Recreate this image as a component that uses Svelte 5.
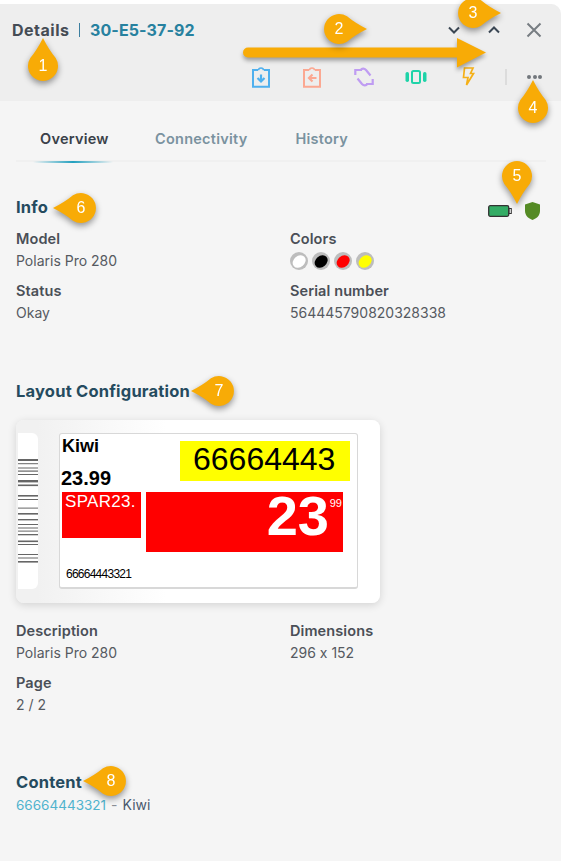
<script>
  const pins = [
    { n: 1, x: 43, y: 66, dir: 0 },
    { n: 2, x: 339, y: 29, dir: 90 },
    { n: 3, x: 473, y: 13, dir: 90 },
    { n: 4, x: 533, y: 108, dir: 0 },
    { n: 5, x: 517, y: 176, dir: 180 },
    { n: 6, x: 81, y: 208, dir: 270 },
    { n: 7, x: 219, y: 391, dir: 270 },
    { n: 8, x: 111, y: 781, dir: 270 }
  ];
  const bars = [[0,2],[4.2,1],[8.5,1],[11.5,1.2],[15,1],[21,2.4],[25.5,1.6],[36,1.6],[40,1],[48.6,1],[54,1.6],[60,1.4],[65,1],[68.5,1],[71.6,1],[75,1.3],[81.5,1.6],[85,1],[95,1],[98.5,1],[102,1.6]];
  const swatches = ["#fff", "#000", "#f00", "#ff0"];
</script>

<div class="panel">
  <header class="head">
    <div class="top">
      <div class="title">
        <span class="details">Details</span>
        <span class="bar"></span>
        <span class="id">30-E5-37-92</span>
      </div>
      <div class="nav">
        <svg width="14" height="14" viewBox="0 0 14 14"><path d="M2 4.500 7 9.500 12 4.500" class="chev"/></svg>
        <svg width="14" height="14" viewBox="0 0 14 14"><path d="M2 9.500 7 4.500 12 9.500" class="chev"/></svg>
        <svg width="18" height="18" viewBox="0 0 18 18"><path d="M2.500 2.500 15.500 15.500M15.500 2.500 2.500 15.500" class="x"/></svg>
      </div>
    </div>
    <div class="tools">
      <svg class="ic" width="18" height="21" viewBox="0 0 18 21" fill="none" stroke="#4fb0ee"><path d="M6 3H1v16.800h16V3h-5" stroke-width="2"/><path d="M6.500 3.300a2.500 2.300 0 0 1 5 0" stroke-width="1.500"/><path d="M9 7.500v7M5.500 11 9 14.500 12.500 11" stroke-width="2.200"/></svg>
      <svg class="ic" width="18" height="21" viewBox="0 0 18 21" fill="none" stroke="#fba892"><path d="M6 3H1v16.800h16V3h-5" stroke-width="2"/><path d="M6.500 3.300a2.500 2.300 0 0 1 5 0" stroke-width="1.500"/><path d="M13.500 11H6M9.500 7.500 6 11l3.500 3.500" stroke-width="2.200"/></svg>
      <svg class="ic" width="20" height="20" viewBox="0 0 20 20" fill="none" stroke="#bf9cf2" stroke-width="2.200"><path d="M1.300 8V3H8"/><path d="M7 2.500Q9.700 0.500 12 3L16.500 8.500"/><path d="M18.700 12V17H12"/><path d="M13 17.500Q10.300 19.500 8 17L3.500 11.500"/></svg>
      <svg class="ic" width="22" height="14" viewBox="0 0 22 14"><rect x="7" y="1" width="8" height="12" rx="1.500" fill="none" stroke="#1fd3a8" stroke-width="2"/><rect x="0.500" y="2" width="3.500" height="10" rx="1.700" fill="#1fd3a8"/><rect x="18" y="2" width="3.500" height="10" rx="1.700" fill="#1fd3a8"/></svg>
      <svg class="ic" width="14" height="20" viewBox="0 0 14 20"><path d="M3.500 1h8.500L9.500 6.500H12.500L5.500 18 7 10.500H2.500z" fill="none" stroke="#f5b017" stroke-width="1.700"/></svg>
      <span class="divider"></span>
      <span class="dots"><i></i><i></i><i></i></span>
    </div>
  </header>

  <main class="body">
    <nav class="tabs">
      <span class="tab active">Overview</span>
      <span class="tab">Connectivity</span>
      <span class="tab">History</span>
    </nav>

    <section class="info">
      <div class="sec-head">
        <h2>Info</h2>
        <div class="status-icons">
          <svg width="24" height="12" viewBox="0 0 24 12"><rect x="0.700" y="0.700" width="20" height="10.600" rx="1.500" fill="#34ac65" stroke="#333" stroke-width="1.300"/><rect x="21" y="3.500" width="2.300" height="5" fill="none" stroke="#333" stroke-width="1"/></svg>
          <svg width="15" height="18" viewBox="0 0 15 18"><path d="M7.500 0 15 2.500V9c0 4.500-3.500 7.500-7.500 9C3.500 16.500 0 13.500 0 9V2.500z" fill="#558b25"/></svg>
        </div>
      </div>
      <div class="grid">
        <div><div class="lbl">Model</div><div class="val">Polaris Pro 280</div></div>
        <div>
          <div class="lbl">Colors</div>
          <div class="swatches">
            {#each swatches as c}
              <span class="sw"><span class="dot" style="background:{c}"></span></span>
            {/each}
          </div>
        </div>
        <div><div class="lbl">Status</div><div class="val">Okay</div></div>
        <div><div class="lbl">Serial number</div><div class="val">564445790820328338</div></div>
      </div>
    </section>

    <section class="layout">
      <h2>Layout Configuration</h2>
      <div class="card">
        <div class="strip">
          <svg width="20" height="156" viewBox="0 0 20 156">
            {#each bars as b}
              <rect x="0" y={b[0] + 26} width="20" height={b[1]} fill="#666" />
            {/each}
          </svg>
        </div>
        <div class="tag">
          <span class="t kiwi">Kiwi</span>
          <span class="t price">23.99</span>
          <span class="t yellow">66664443</span>
          <span class="t spar">SPAR23.</span>
          <span class="t red"><b>23</b><small>99</small></span>
          <span class="t code">66664443321</span>
        </div>
      </div>
      <div class="grid g2">
        <div><div class="lbl">Description</div><div class="val">Polaris Pro 280</div></div>
        <div><div class="lbl">Dimensions</div><div class="val">296 x 152</div></div>
        <div><div class="lbl">Page</div><div class="val">2 / 2</div></div>
      </div>
    </section>

    <section class="content">
      <h2>Content</h2>
      <div class="val"><span class="link">66664443321</span><span class="dash">-</span><span class="kw">Kiwi</span></div>
    </section>
  </main>

  <div class="arrow">
    <svg width="250" height="36" viewBox="0 0 250 36">
      <path d="M5 9.500H214V0L243 14.500 214 29.500V19.500H5a5 5 0 0 1 0-10z" fill="#f8ab06"/>
    </svg>
  </div>
  {#each pins as p}
    <div class="pin" style="left:{p.x - 16}px;top:{p.y - 16}px">
      <svg width="32" height="32" viewBox="-16 -16 32 32" style="transform:rotate({p.dir}deg)">
        <path d="M0 -28Q6 -16 12.700 -8.040A15 15 0 1 1 -12.700 -8.040Q-6 -16 0 -28z" fill="#f8ab06"/>
      </svg>
      <span>{p.n}</span>
    </div>
  {/each}
</div>

<style>
  :global(body) { margin: 0; background: #fff; }
  .panel {
    position: relative;
    width: 561px;
    height: 857px;
    margin-top: 4px;
    background: #f5f5f5;
    border-top-right-radius: 10px;
    font-family: "Inter", "Noto Sans", sans-serif;
    font-feature-settings: "calt" 0;
    color: #4a4f57;
  }
  .head {
    height: 97px;
    background: #eeeeee;
    border-top-right-radius: 10px;
    box-sizing: border-box;
    padding: 16px 18px 0 12px;
  }
  .top { display: flex; justify-content: space-between; align-items: center; height: 20px; }
  .title { display: flex; align-items: center; font-weight: 700; font-size: 16px; }
  .details { color: #454c55; width: 58px; letter-spacing: 0.500px; }
  .bar { width: 1px; height: 14px; background: #3c7fa0; margin: 0 10px 0 9px; }
  .id { color: #27819f; letter-spacing: 0.100px; }
  .nav { display: flex; align-items: center; }
  .nav svg:nth-child(1) { margin-right: 26px; }
  .nav svg:nth-child(2) { margin-right: 24px; }
  .chev { fill: none; stroke: #3b4754; stroke-width: 2; }
  .x { fill: none; stroke: #777d82; stroke-width: 2; }
  .tools { display: flex; align-items: center; height: 24px; margin-top: 25px; padding-left: 240px; }
  .tools .ic { flex: none; }
  .ic:nth-child(1) { margin-right: 33px; }
  .ic:nth-child(2) { margin-right: 33px; }
  .ic:nth-child(3) { margin-right: 31px; }
  .ic:nth-child(4) { margin-right: 34px; }
  .ic:nth-child(5) { margin-right: 30px; }
  .divider { flex: none; width: 2px; height: 16px; background: #dcdcdc; margin-right: 20px; }
  .dots { display: flex; gap: 1.500px; flex: none; }
  .dots i { width: 4px; height: 4px; border-radius: 50%; background: #72777c; }

  .body { padding: 0 16px; }
  .tabs {
    display: flex;
    height: 61px;
    box-sizing: border-box;
    padding: 29px 0 0 24px;
    border-bottom: 2px solid #f0f0f0;
    width: 530px;
    gap: 48px;
  }
  .tab { font-size: 14.500px; font-weight: 600; color: #7a929f; line-height: 18px; letter-spacing: 0.250px; }
  .active { color: #3a4149; position: relative; width: 67px; white-space: nowrap; }
  .active::after {
    content: "";
    position: absolute;
    left: -7px;
    width: 80px;
    top: 31px;
    height: 2px;
    background: linear-gradient(90deg, transparent, #23a0bf 50%, transparent);
  }
  h2 { margin: 0; font-size: 16.500px; letter-spacing: 0.200px; font-weight: 700; color: #254b5f; line-height: 20px; }
  .info { padding-top: 35px; }
  .sec-head { display: flex; justify-content: space-between; align-items: flex-start; height: 20px; padding-right: 5px; }
  .status-icons { display: flex; align-items: center; gap: 13px; height: 18px; margin-top: 5px; }
  .grid { display: grid; grid-template-columns: 274px 1fr; row-gap: 10px; margin-top: 12px; }
  .lbl { font-size: 14.500px; letter-spacing: 0.100px; font-weight: 600; color: #4a4f57; line-height: 20px; }
  .val { font-size: 14px; font-weight: 400; color: #555a61; line-height: 20px; margin-top: 2px; }
  .swatches { display: flex; gap: 4px; margin-top: 2px; height: 20px; align-items: center; }
  .sw { width: 18px; height: 18px; border-radius: 50%; background: #bdbdbd; display: flex; align-items: center; justify-content: center; }
  .dot { width: 14px; height: 10.500px; border-radius: 50%; transform: rotate(-40deg); }
  .layout { padding-top: 58px; }
  .card {
    width: 364px;
    height: 183px;
    margin-top: 19px;
    border-radius: 8px;
    box-shadow: 0 2px 8px rgba(0,0,0,.14);
    position: relative;
    box-sizing: border-box;
    background: linear-gradient(90deg, #f1f1f1 0 22px, #fff 150px);
  }
  .strip {
    position: absolute;
    left: 2px;
    top: 13px;
    width: 20px;
    height: 156px;
    background: #fff;
    border-radius: 0 6px 6px 0;
  }
  .strip svg { display: block; }
  .tag {
    position: absolute;
    left: 43px;
    top: 13px;
    width: 299px;
    height: 156px;
    background: #fff;
    border-radius: 3px;
    border: 1px solid #d8d8d8;
    border-bottom-width: 2px;
    box-sizing: border-box;
    font-family: "Liberation Sans", Arial, sans-serif;
    color: #000;
  }
  .t { position: absolute; white-space: nowrap; }
  .kiwi { left: 2px; top: 1px; font-weight: 700; font-size: 18px; line-height: 22px; }
  .price { left: 1px; top: 33px; font-weight: 700; font-size: 20px; line-height: 22px; }
  .yellow { left: 120px; top: 7px; width: 170px; height: 40px; background: #ff0; font-size: 32px; line-height: 37px; text-indent: 13px; }
  .spar { left: 2px; top: 58px; width: 79px; height: 46px; background: #f00; color: #fff; font-size: 17px; line-height: 19px; text-indent: 3px; letter-spacing: 0.300px; }
  .red { left: 86px; top: 58px; width: 197px; height: 60px; background: #f00; color: #fff; }
  .red b { position: absolute; right: 14px; top: -4px; font-size: 56px; line-height: 56px; font-weight: 700; }
  .red small { position: absolute; right: 1px; top: 5px; font-size: 11px; line-height: 12px; }
  .code { left: 6px; top: 133px; font-size: 12px; line-height: 14px; letter-spacing: -0.750px; }
  .g2 { margin-top: 18px; }
  .content { padding-top: 57px; }
  .link { color: #4fb3cd; font-size: 13.500px; }
  .dash { color: #8a8f96; margin: 0 5px; }
  .kw { color: #4a5a6e; }
  .content .val { margin-top: 3px; }

  .arrow { position: absolute; left: 243px; top: 34px; filter: drop-shadow(0 3px 2px rgba(0,0,0,.35)); }
  .arrow svg { display: block; }
  .pin {
    position: absolute;
    width: 32px;
    height: 32px;
    margin-top: -4px;
    filter: drop-shadow(0 3px 3px rgba(0,0,0,.4));
  }
  .pin svg { display: block; overflow: visible; }
  .pin span {
    position: absolute;
    inset: 0;
    display: flex;
    align-items: center;
    justify-content: center;
    color: #fff;
    font-family: "Liberation Sans", Arial, sans-serif;
    font-size: 16px;
  }
</style>
